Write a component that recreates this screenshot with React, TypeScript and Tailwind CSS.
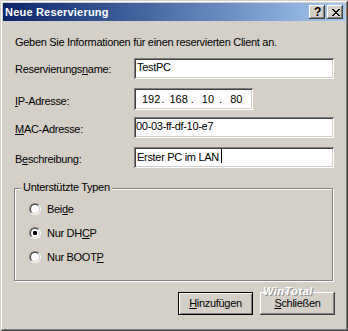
import React from "react";

const Mn: React.FC<{ children: React.ReactNode }> = ({ children }) => (
	<span className="underline underline-offset-[1px] decoration-1">{children}</span>
);

const sunken =
	"bg-white shadow-[inset_1px_1px_0_#808080,inset_-1px_-1px_0_#fff,inset_2px_2px_0_#404040,inset_-2px_-2px_0_#d4d0c8]";
const raised =
	"shadow-[inset_-1px_-1px_0_#404040,inset_1px_1px_0_#fff,inset_-2px_-2px_0_#808080,inset_2px_2px_0_#d4d0c8]";

const TitleButton: React.FC<{ children: React.ReactNode }> = ({ children }) => (
	<div className={`w-[16px] h-[14px] bg-[#d4d0c8] flex items-center justify-center ${raised}`}>{children}</div>
);

const CloseGlyph = () => (
	<svg width="8" height="7" viewBox="0 0 8 7" shapeRendering="crispEdges" className="ml-[1px]">
		<path d="M0 0h2v1H0zM6 0h2v1H6zM1 1h2v1H1zM5 1h2v1H5zM2 2h4v1H2zM3 3h2v1H3zM2 4h4v1H2zM1 5h2v1H1zM5 5h2v1H5zM0 6h2v1H0zM6 6h2v1H6z" fill="#000" />
	</svg>
);

const Radio: React.FC<{ checked?: boolean; children: React.ReactNode }> = ({ checked, children }) => (
	<div className="h-[24px] flex items-center">
		<div className="w-[12px] h-[12px] rounded-full border border-t-[#808080] border-l-[#808080] border-r-white border-b-white">
			<div className="w-full h-full rounded-full border border-t-[#404040] border-l-[#404040] border-r-[#d4d0c8] border-b-[#d4d0c8] bg-white flex items-center justify-center">
				{checked && <div className="w-[4px] h-[4px] rounded-[1px] bg-black" />}
			</div>
		</div>
		<span className="ml-[6px]">{children}</span>
	</div>
);

export default function App() {
	return (
		<div className="w-[348px] h-[331px] bg-[#d4d0c8] p-[3px] text-black text-[11px] leading-[13px] tracking-[-0.3px] font-['Liberation_Sans',Arial,sans-serif] shadow-[inset_1px_1px_0_#d4d0c8,inset_-1px_-1px_0_#404040,inset_2px_2px_0_#fff,inset_-2px_-2px_0_#808080]">
			{/* title bar */}
			<div className="h-[18px] flex items-center pl-[2px] pr-[2px] bg-linear-to-r from-[#0a246a] to-[#a6caf0]">
				<span className="font-bold text-white tracking-[0.2px]">Neue Reservierung</span>
				<div className="ml-auto flex gap-[2px]">
					<TitleButton>
						<span className="font-bold text-[12px] leading-[12px] ml-[1px]">?</span>
					</TitleButton>
					<TitleButton>
						<CloseGlyph />
					</TitleButton>
				</div>
			</div>

			<p className="mt-[15px] ml-[12px]">Geben Sie Informationen für einen reservierten Client an.</p>

			<div className="mt-[9px] ml-[12px] flex items-start">
				<label className="w-[119px] pt-[5px]">
					Reservierungs<Mn>n</Mn>ame:
				</label>
				<div className={`w-[200px] h-[21px] pl-[3px] pt-[3px] ${sunken}`}>TestPC</div>
			</div>

			<div className="mt-[9px] ml-[12px] flex items-start">
				<label className="w-[119px] pt-[7px]">
					<Mn>I</Mn>P-Adresse:
				</label>
				<div className={`w-[119px] h-[22px] pl-[8px] pt-[5px] flex tracking-normal ${sunken}`}>
					<span>192</span>
					<span className="ml-[1px]">.</span>
					<span className="ml-[5px]">168</span>
					<span className="ml-[3px]">.</span>
					<span className="ml-[8px]">10</span>
					<span className="ml-[5px]">.</span>
					<span className="ml-[8px]">80</span>
				</div>
			</div>

			<div className="mt-[7px] ml-[12px] flex items-start">
				<label className="w-[119px] pt-[6px]">
					<Mn>M</Mn>AC-Adresse:
				</label>
				<div className={`w-[200px] h-[21px] pl-[2px] pt-[3px] ${sunken}`}>00-03-ff-df-10-e7</div>
			</div>

			<div className="mt-[9px] ml-[12px] flex items-start">
				<label className="w-[119px] pt-[6px]">
					B<Mn>e</Mn>schreibung:
				</label>
				<div className={`w-[200px] h-[21px] pl-[3px] pt-[4px] flex items-start ${sunken}`}>
					<span>Erster PC im LAN</span>
					<span className="w-px h-[14px] bg-black ml-[2px] -mt-[2px]" />
				</div>
			</div>

			{/* group box */}
			<div className="relative mt-[20px] ml-[11px] w-[319px] h-[93px] border border-[#808080] pl-[14px] pt-[8px] shadow-[1px_1px_0_#fff,inset_1px_1px_0_#fff]">
				<span className="absolute -top-[8px] left-[6px] px-[2px] bg-[#d4d0c8]">Unterstützte Typen</span>
				<Radio>
					Bei<Mn>d</Mn>e
				</Radio>
				<Radio checked>
					Nur DH<Mn>C</Mn>P
				</Radio>
				<Radio>
					Nur BOOT<Mn>P</Mn>
				</Radio>
			</div>

			{/* buttons */}
			<div className="relative mt-[11px] ml-[175px] flex gap-[7px]">
				<button className="w-[75px] h-[23px] border border-black bg-[#d4d0c8] shadow-[inset_1px_1px_0_#fff,inset_-1px_-1px_0_#808080] flex items-center justify-center">
					<span>
						<Mn>H</Mn>inzufügen
					</span>
				</button>
				<button className={`w-[75px] h-[23px] bg-[#d4d0c8] flex items-center justify-center ${raised}`}>
					<span>
						<Mn>S</Mn>chließen
					</span>
				</button>
				<span className="absolute left-[85px] -top-[6px] text-[11px] leading-[11px] font-bold italic text-white tracking-[0.5px] [text-shadow:1px_1px_0_#909090]">
					WinTotal
				</span>
			</div>
		</div>
	);
}
